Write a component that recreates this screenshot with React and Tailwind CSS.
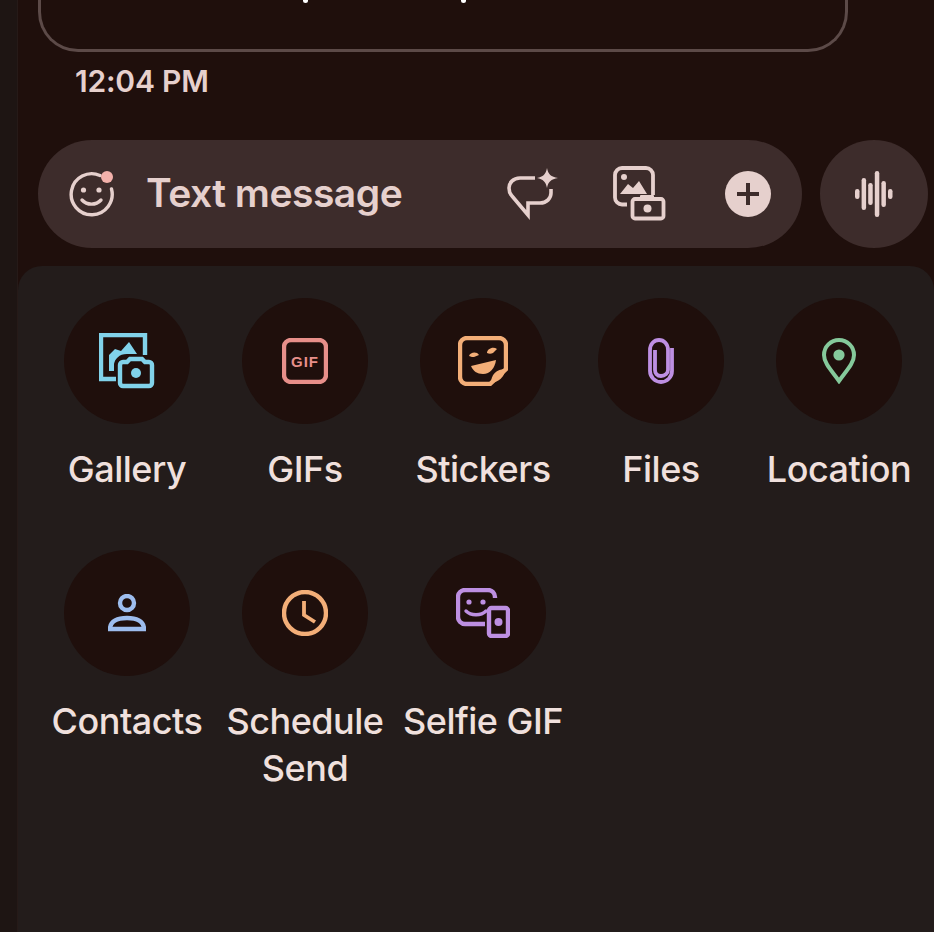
const font = { fontFamily: '"Inter","Roboto",sans-serif' };

function Smile() {
  return (
    <svg width="48" height="48" viewBox="0 0 48 48" fill="none" stroke="#e6d0cd" strokeWidth="3.4">
      <path d="M32 5.5A20.5 20.5 0 1 0 43.5 19" strokeLinecap="round" />
      <circle cx="15.5" cy="20" r="2.6" fill="#e6d0cd" stroke="none" />
      <circle cx="31" cy="20" r="2.6" fill="#e6d0cd" stroke="none" />
      <path d="M14 30c5 5.5 14 5.5 19 0" strokeLinecap="round" />
      <circle cx="39" cy="7" r="6" fill="#f4b1ab" stroke="none" />
    </svg>
  );
}
function SparkBubble() {
  return (
    <svg width="52" height="52" viewBox="0 0 52 52" fill="none">
      <path d="M28 10H13C6 10 2 15 2 20c0 4 1 6 3 8l16 19V35h12c7 0 11-5 11-10v-4" stroke="#e6d0cd" strokeWidth="3.6" />
      <path d="M40 0c1 6 4 9 11 10-7 1-10 4-11 10-1-6-4-9-10-10 6-1 9-4 10-10z" fill="#e6d0cd" />
    </svg>
  );
}
function GalleryCam() {
  return (
    <svg width="54" height="56" viewBox="0 0 54 56" fill="none">
      <path d="M14 38.500H9a7 7 0 0 1-7-7V9a7 7 0 0 1 7-7h24a7 7 0 0 1 7 7v20" stroke="#e6d0cd" strokeWidth="3.8" />
      <circle cx="11" cy="11" r="3" fill="#e6d0cd" />
      <path d="M7 28L15 18l5 4 6-7 8 13z" fill="#e6d0cd" />
      <rect x="19.500" y="33" width="31" height="19.500" rx="2.500" stroke="#e6d0cd" strokeWidth="3.800" fill="#3d2c2b" />
      <rect x="27" y="29" width="14" height="5" rx="1" fill="#e6d0cd" />
      <circle cx="34.500" cy="42.500" r="4" fill="#e6d0cd" />
    </svg>
  );
}
function Wave() {
  return (
    <svg width="38" height="46" viewBox="0 0 38 46" fill="#e6d0cd">
      <rect x="0" y="18" width="4.500" height="10" rx="2.200" />
      <rect x="6.600" y="7" width="4.500" height="32" rx="2.200" />
      <rect x="13.200" y="12" width="4.500" height="22" rx="2.200" />
      <rect x="19.800" y="0" width="4.500" height="46" rx="2.200" />
      <rect x="26.400" y="10" width="4.500" height="26" rx="2.200" />
      <rect x="33" y="18" width="4.500" height="10" rx="2.200" />
    </svg>
  );
}
function Plus() {
  return (
    <svg width="46" height="46" viewBox="0 0 46 46">
      <circle cx="23" cy="23" r="23" fill="#e6d0cd" />
      <path d="M12 23h22M23 12v22" stroke="#3d2c2b" strokeWidth="4" />
    </svg>
  );
}

const blue = "#81d2ea", red = "#e78f8a", orange = "#f3ae78", purple = "#bd8fe2", green = "#85c99b", sky = "#9dbdee";

const icons = {
  gallery: (
    <svg width="56" height="56" viewBox="0 0 56 56" fill="none">
      <path d="M17 46H2V2h44v20" stroke={blue} strokeWidth="4.400" />
      <path d="M10 38V22l6-6 6 2 8-9 8 12H28c-8 0-12 5-13 10v7z" fill={blue} />
      <path d="M21 32a3 3 0 0 1 3-3h4l3-3h12l3 3h4a3 3 0 0 1 3 3v18a3 3 0 0 1-3 3H24a3 3 0 0 1-3-3z" stroke={blue} strokeWidth="4.400" fill="#1f0f0c" />
      <circle cx="37" cy="40" r="5" fill={blue} />
    </svg>
  ),
  gif: (
    <svg width="46" height="46" viewBox="0 0 46 46" fill="none">
      <rect x="2" y="2" width="42" height="42" rx="7" stroke={red} strokeWidth="4.400" />
      <text x="23" y="28.500" textAnchor="middle" fontFamily="Liberation Sans, sans-serif" fontWeight="700" fontSize="15" letterSpacing="1" fill={red}>GIF</text>
    </svg>
  ),
  sticker: (
    <svg width="50" height="50" viewBox="0 0 50 50" fill="none">
      <path d="M32 48H9a7 7 0 0 1-7-7V9a7 7 0 0 1 7-7h32a7 7 0 0 1 7 7v24z" stroke={orange} strokeWidth="4.400" />
      <path d="M33 47c0-8 5-14 15-14-2 8-7 13-15 14z" fill={orange} />
      <path d="M11 20c1-4 8-5 10-1l-5 2c-1 0-3 0-5-1zM29 17c0-4 6-7 10-4l-4 4c-2 1-4 1-6 0z" fill={orange} />
      <path d="M13 30l25-6c-1 8-6 14-13 14-6 0-10-3-12-8z" fill={orange} />
    </svg>
  ),
  clip: (
    <svg width="26" height="46" viewBox="0 0 26 46" fill="none" stroke={purple} strokeWidth="3.800">
      <path d="M24 10v23c0 6-5 11-11 11S2 39 2 33V12C2 6 6 2 11 2s9 4 9 10v20c0 3-3 6-7 6s-6-3-6-6V12" />
    </svg>
  ),
  pin: (
    <svg width="34" height="46" viewBox="0 0 34 46" fill="none">
      <path d="M17 43C9 32 2 25 2 17a15 15 0 0 1 30 0c0 8-7 15-15 26z" stroke={green} strokeWidth="4" />
      <circle cx="17" cy="17" r="5.600" fill={green} />
    </svg>
  ),
  person: (
    <svg width="38" height="38" viewBox="0 0 38 38" fill="none">
      <circle cx="19" cy="9" r="7" stroke={sky} strokeWidth="4.400" />
      <path d="M2 35c0-8 8-11 17-11s17 3 17 11z" stroke={sky} strokeWidth="4.400" />
    </svg>
  ),
  clock: (
    <svg width="46" height="46" viewBox="0 0 46 46" fill="none" stroke={orange}>
      <circle cx="23" cy="23" r="21" strokeWidth="4.400" />
      <path d="M22 11v14l11 7" strokeWidth="3.800" />
    </svg>
  ),
  selfie: (
    <svg width="54" height="50" viewBox="0 0 54 50" fill="none">
      <path d="M39 10V9a7 7 0 0 0-7-7H9a7 7 0 0 0-7 7v20a7 7 0 0 0 7 7h20" stroke={purple} strokeWidth="4.400" />
      <circle cx="13" cy="14" r="2.600" fill={purple} />
      <circle cx="27" cy="14" r="2.600" fill={purple} />
      <path d="M10 23c5 5 15 5 20 0" stroke={purple} strokeWidth="3.400" strokeLinecap="round" />
      <rect x="33" y="20" width="19" height="28" rx="2.500" stroke={purple} strokeWidth="4.400" />
      <circle cx="42.500" cy="34" r="4" fill={purple} />
    </svg>
  ),
};

const items = [
  ["Gallery", "gallery"], ["GIFs", "gif"], ["Stickers", "sticker"], ["Files", "clip"], ["Location", "pin"],
  ["Contacts", "person"], ["Schedule Send", "clock"], ["Selfie GIF", "selfie"],
];

function Item({ label, icon }) {
  return (
    <div className="flex flex-col items-center">
      <div className="w-[126px] h-[126px] rounded-full bg-[#1f0f0c] flex items-center justify-center">{icons[icon]}</div>
      <div className="mt-[22px] w-[178px] text-center text-[36px] leading-[47px] font-medium tracking-[-0.5px] text-[#f0e0dd]">{label}</div>
    </div>
  );
}

export default function App() {
  return (
    <div style={font} className="w-[934px] h-[932px] overflow-hidden flex bg-[#1f0f0c]">
      <div className="w-[18px] shrink-0 bg-[#1e1513] border-r border-[#261a18]" />
      <div className="flex-1 min-w-0 flex flex-col">
        <div className="pl-[20px] pr-[86px]">
          <div className="h-[52px] border-[3px] border-t-0 border-[#5c4a48] rounded-b-[40px] relative">
            <div className="absolute left-[262px] top-0 w-[5px] h-[3px] rounded-b-full bg-white" />
            <div className="absolute left-[420px] top-0 w-[5px] h-[3px] rounded-b-full bg-white" />
          </div>
        </div>
        <div className="pl-[57px] mt-[12px] h-[34px] text-[30px] leading-[34px] font-semibold text-[#e6d0cd] tracking-[-0.2px]">12:04 PM</div>
        <div className="mt-[42px] pl-[20px] pr-[6px] flex gap-[18px]">
          <div className="w-[764px] h-[108px] rounded-full bg-[#3d2c2b] flex items-center">
            <div className="ml-[30px]"><Smile /></div>
            <div className="ml-[30px] pb-[2px] text-[39px] font-semibold tracking-[-0.5px] text-[#e6d0cd] flex-1">Text message</div>
            <div className="mr-[31px] flex items-center">
              <SparkBubble />
              <div className="ml-[54px]"><GalleryCam /></div>
              <div className="ml-[58px]"><Plus /></div>
            </div>
          </div>
          <div className="w-[108px] h-[108px] rounded-full bg-[#3d2c2b] flex items-center justify-center"><Wave /></div>
        </div>
        <div className="mt-[18px] flex-1 bg-[#231c1b] rounded-t-[24px] pl-[20px] pt-[32px]">
          <div className="grid grid-cols-[repeat(5,178px)] gap-y-[57px] items-start">
            {items.map(([l, i]) => <Item key={l} label={l} icon={i} />)}
          </div>
        </div>
      </div>
    </div>
  );
}
